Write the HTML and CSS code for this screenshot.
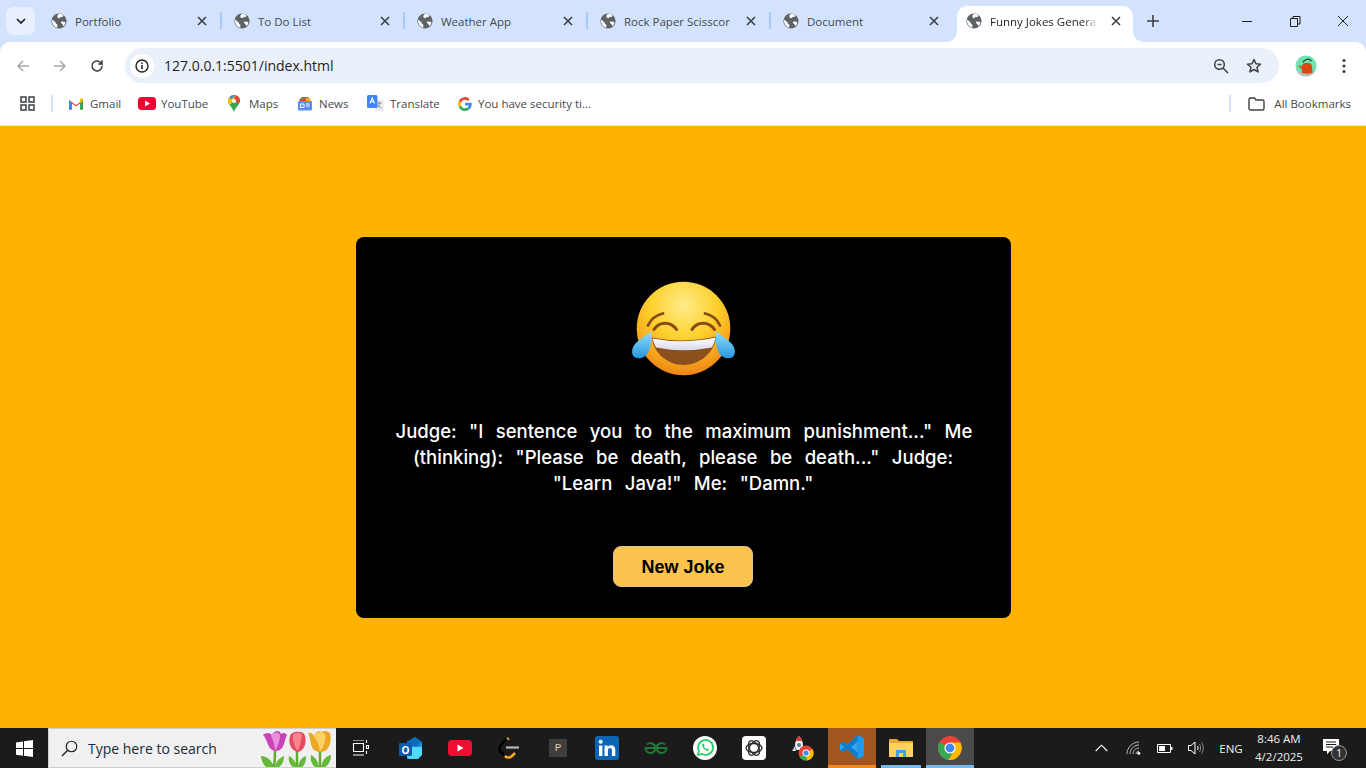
FILE: index.html
```html
<!DOCTYPE html>
<html lang="en">
<head>
<meta charset="utf-8">
<title>Funny Jokes Generator</title>
<link rel="stylesheet" href="styles.css">
</head>
<body>
<svg class="defs" width="0" height="0" aria-hidden="true">
  <defs>
    <symbol id="globe" viewBox="0 0 16 16">
      <circle cx="8" cy="8" r="7.6" fill="#5f6368"/>
      <path d="M1.200 6.600 4.600 9.400l.4 1.400 1.400 1-.2 3A7 7 0 0 1 1.200 6.600ZM7.600 1.100h2.800l2.200 1.600-1.600 1.500-1.400-.4-1 1.500-1.800-.5-.6-1.700ZM10 8.600l3.400.2 1.100 1a7 7 0 0 1-2.300 3.400l-.6-2-1.400-1Z" fill="#fff"/>
    </symbol>
    <symbol id="x" viewBox="0 0 10 10">
      <path d="M1 1l8 8M9 1l-8 8" stroke="#3c4043" stroke-width="1.600" fill="none"/>
    </symbol>
  </defs>
</svg>

<div class="browser">
  <header class="tabstrip">
    <button class="tablist"><svg width="10" height="6" viewBox="0 0 10 6"><path d="M1 1l4 4 4-4" fill="none" stroke="#202124" stroke-width="1.700"/></svg></button>
    <div class="tab"><svg class="fav"><use href="#globe"/></svg><span class="tab-title">Portfolio</span><svg class="tab-x"><use href="#x"/></svg></div>
    <div class="tab"><svg class="fav"><use href="#globe"/></svg><span class="tab-title">To Do List</span><svg class="tab-x"><use href="#x"/></svg></div>
    <div class="tab"><svg class="fav"><use href="#globe"/></svg><span class="tab-title">Weather App</span><svg class="tab-x"><use href="#x"/></svg></div>
    <div class="tab"><svg class="fav"><use href="#globe"/></svg><span class="tab-title">Rock Paper Scisscor</span><svg class="tab-x"><use href="#x"/></svg></div>
    <div class="tab tab-last"><svg class="fav"><use href="#globe"/></svg><span class="tab-title">Document</span><svg class="tab-x"><use href="#x"/></svg></div>
    <div class="tab-active"><svg class="fav"><use href="#globe"/></svg><span class="tab-title tab-title-active">Funny Jokes Genera</span><svg class="tab-x"><use href="#x"/></svg></div>
    <svg class="newtab" width="12" height="12" viewBox="0 0 12 12"><path d="M6 0v12M0 6h12" stroke="#3c4043" stroke-width="1.600"/></svg>
    <div class="winctl">
      <svg class="ctl" viewBox="0 0 48 20"><path d="M19 10.500h10" stroke="#1f1f1f" stroke-width="1"/></svg>
      <svg class="ctl" viewBox="0 0 48 20"><path d="M19.500 7.500h7v8h-7zM22 7.500V5.500h7v7.500h-2.500" fill="none" stroke="#1f1f1f" stroke-width="1"/></svg>
      <svg class="ctl" viewBox="0 0 48 20"><path d="M19 5l10 10M29 5 19 15" stroke="#1f1f1f" stroke-width="1"/></svg>
    </div>
  </header>

  <nav class="toolbar">
    <svg class="nav-ico" viewBox="0 0 16 16"><path d="M14 8H3M8 3 3 8l5 5" fill="none" stroke="#a5a8ac" stroke-width="1.500"/></svg>
    <svg class="nav-ico" viewBox="0 0 16 16"><path d="M2 8h11M8 3l5 5-5 5" fill="none" stroke="#a5a8ac" stroke-width="1.500"/></svg>
    <svg class="nav-ico" viewBox="0 0 16 16"><path d="M13 8a5 5 0 1 1-1.500-3.600L13 6V2.300M13 6H9.300" fill="none" stroke="#3c4043" stroke-width="1.500"/></svg>
    <div class="omnibox">
      <span class="site-info"><svg width="14" height="14" viewBox="0 0 14 14"><circle cx="7" cy="7" r="6" fill="none" stroke="#1f1f1f" stroke-width="1.400"/><path d="M7 6v4.200M7 3.600v1.400" stroke="#1f1f1f" stroke-width="1.500"/></svg></span>
      <span class="url">127.0.0.1:5501/index.html</span>
      <svg class="omni-ico zoom-ico" viewBox="0 0 16 16"><circle cx="6.500" cy="6.500" r="4.800" fill="none" stroke="#3c4043" stroke-width="1.500"/><path d="M4.500 6.500h4M10 10l5 5" stroke="#3c4043" stroke-width="1.500"/></svg>
      <svg class="omni-ico" viewBox="0 0 16 16"><path d="m8 1.500 1.900 4.300 4.700.4-3.600 3.100 1.100 4.600L8 11.500l-4.100 2.400L5 9.300 1.400 6.200l4.700-.4Z" fill="none" stroke="#3c4043" stroke-width="1.500" stroke-linejoin="round"/></svg>
    </div>
    <svg class="avatar" viewBox="0 0 22 22"><circle cx="11" cy="11" r="10.500" fill="#6fe3b0"/><path d="M2.500 17a10.500 10.500 0 0 0 17 0Z" fill="#b9bcc0"/><path d="M3.500 10l3 2 .5-1.500C8 8.500 9.500 8 11 8h2c2.500 0 4 1.500 4 3.500l.5 6c-.5 1.500-10 1.500-10.500 0l-.2-3.500L4 12Z" fill="#d9480f"/><path d="M8 7.500c1-3.500 6-4.500 8.500-1.500" fill="none" stroke="#274c3c" stroke-width="1.300"/></svg>
    <svg class="menu" width="4" height="16" viewBox="0 0 4 16"><circle cx="2" cy="2.500" r="1.600" fill="#3c4043"/><circle cx="2" cy="8" r="1.600" fill="#3c4043"/><circle cx="2" cy="13.500" r="1.600" fill="#3c4043"/></svg>
  </nav>

  <div class="bookmarks">
    <svg class="apps" width="15" height="15" viewBox="0 0 15 15"><path d="M1 1h5v5H1zM9 1h5v5H9zM1 9h5v5H1zM9 9h5v5H9z" fill="none" stroke="#3c4043" stroke-width="1.500"/></svg>
    <span class="bm-sep"></span>
    <div class="bm-list">
      <div class="bm"><svg class="bm-ico" viewBox="0 0 16 16"><path d="M1 13.500V4l7 5 7-5v9.500h-3V7.500L8 10.500 4 7.500v6Z" fill="#ea4335"/><path d="M1 13.500h3v-6L1 4Z" fill="#4285f4"/><path d="M12 13.500h3V4l-3 3.500Z" fill="#34a853"/><path d="M15 4v-.5c0-1-1.200-1.500-2-1L12 3.300v4.200Z" fill="#fbbc04"/></svg><span>Gmail</span></div>
      <div class="bm"><svg class="bm-ico bm-yt" viewBox="0 0 18 13"><rect width="18" height="13" rx="3.500" fill="#f00033"/><path d="m7 3.500 5 3-5 3Z" fill="#fff"/></svg><span>YouTube</span></div>
      <div class="bm"><svg class="bm-ico bm-maps" viewBox="0 0 12 17"><path d="M6 0a6 6 0 0 1 6 6c0 3.500-4.500 6-6 11C4.500 12 0 9.500 0 6a6 6 0 0 1 6-6Z" fill="#34a853"/><path d="M6 0a6 6 0 0 1 4.500 2L1.600 10A6 6 0 0 1 0 6a6 6 0 0 1 6-6Z" fill="#fbbc04"/><path d="M1.600 2A6 6 0 0 1 6 0l1.500.2L3 4.500Z" fill="#4285f4"/><path d="M7.500.2A6 6 0 0 1 12 6l-2 2.500L6 4Z" fill="#ea4335"/><circle cx="6" cy="6" r="2.100" fill="#fff"/></svg><span>Maps</span></div>
      <div class="bm"><svg class="bm-ico" viewBox="0 0 16 16"><path d="M3 3l2-2h6l2 2v4H3Z" fill="#34a853"/><path d="M2.500 3 9 2v4H2.500Z" fill="#ea4335"/><path d="M9 2l4.500 1v3H9Z" fill="#fbbc04"/><rect x="1" y="5" width="14" height="9.500" rx="1.200" fill="#5a8eea"/><path d="M3.500 8h3.500v3.500H3.500ZM9 8h3.500M9 10h3.500" fill="none" stroke="#fff" stroke-width="1"/></svg><span>News</span></div>
      <div class="bm"><svg class="bm-ico bm-tr" viewBox="0 0 17 17"><path d="M8 4.500h8.500v11.500H8Z" fill="#e8eaed"/><path d="M10.500 8h4M12.500 7v1c0 2-1.500 4-3 4.500M11 10c.5 1.200 2 2.500 3.500 3" fill="none" stroke="#80868b" stroke-width=".9"/><rect width="10.500" height="13" rx="1.500" fill="#4285f4"/><path d="M3 8.500 5.200 3l2.300 5.500M3.800 6.800h2.800" fill="none" stroke="#fff" stroke-width="1.100"/></svg><span>Translate</span></div>
      <div class="bm"><svg class="bm-ico bm-g" viewBox="0 0 14 14"><path d="M13.700 7.200c0-.5 0-1-.1-1.400H7v2.700h3.800a3.200 3.200 0 0 1-1.400 2.100l2.200 1.700a6.700 6.700 0 0 0 2.100-5.100Z" fill="#4285f4"/><path d="M7 14c1.900 0 3.400-.6 4.600-1.700l-2.200-1.700c-.6.400-1.400.7-2.400.7a4.200 4.200 0 0 1-3.900-2.900L.8 10.100A7 7 0 0 0 7 14Z" fill="#34a853"/><path d="M3.100 8.400a4.200 4.200 0 0 1 0-2.700L.8 3.900a7 7 0 0 0 0 6.300Z" fill="#fbbc04"/><path d="M7 2.800c1 0 2 .4 2.700 1.100l2-2A7 7 0 0 0 .8 3.900l2.300 1.800A4.200 4.200 0 0 1 7 2.800Z" fill="#ea4335"/></svg><span>You have security ti...</span></div>
    </div>
    <span class="bm-sep bm-sep-right"></span>
    <div class="bm bm-all"><svg class="bm-ico bm-folder" viewBox="0 0 17 14"><path d="M1 2.500A1.500 1.500 0 0 1 2.500 1h4l1.500 2h6.500A1.500 1.500 0 0 1 16 4.500v7a1.500 1.500 0 0 1-1.500 1.500h-12A1.500 1.500 0 0 1 1 11.500Z" fill="none" stroke="#3c4043" stroke-width="1.400"/></svg><span>All Bookmarks</span></div>
  </div>

  <main class="page">
    <section class="card">
      <svg class="emoji" viewBox="18 8 110 100" role="img" aria-label="Face with tears of joy">
        <defs>
          <radialGradient id="face" cx="50%" cy="25%" r="80%">
            <stop offset="0" stop-color="#ffeb8a"/><stop offset=".45" stop-color="#fdd02c"/><stop offset=".8" stop-color="#f59c1c"/><stop offset="1" stop-color="#e67a12"/>
          </radialGradient>
          <linearGradient id="tear" x1="0" y1="0" x2="0" y2="1">
            <stop offset="0" stop-color="#8ee0f8"/><stop offset="1" stop-color="#2796e0"/>
          </linearGradient>
          <linearGradient id="teeth" x1="0" y1="0" x2="0" y2="1">
            <stop offset="0" stop-color="#ffffff"/><stop offset="1" stop-color="#d9d8ea"/>
          </linearGradient>
        </defs>
        <circle cx="73.500" cy="58.500" r="46.800" fill="url(#face)"/>
        <path d="M38 55.500C41 49 46 45 53 43.500M110 55.500C107 49 102 45 95 43.500" fill="none" stroke="#8a4a16" stroke-width="2.800" stroke-linecap="round"/>
        <path d="M44 59.500C49 51 61 51 66.500 59.500M82 59.500C87 51 99 51 104.500 59.500" fill="none" stroke="#8a4a16" stroke-width="3" stroke-linecap="round"/>
        <path d="M42 67.500Q73 74 106 66.500C105 82 90 95 73.500 95S43 82 42 67.500Z" fill="#8a4f1c"/>
        <path d="M42.500 68.500Q73 74.500 105.500 67.500 104.500 73 102 77.500 73 83 46 77.500 43.500 73 42.500 68.500Z" fill="url(#teeth)"/>
        <path d="M41 61.500C41.500 70 41 80 36 85.500A10 10 0 0 1 24 87C20.500 83 22 76 27 72 31 68.500 36 65 41 61.500Z" fill="url(#tear)"/>
        <path d="M106 61.500C105.500 70 106 80 111 85.500A10 10 0 0 0 123 87C126.500 83 125 76 120 72 116 68.500 111 65 106 61.500Z" fill="url(#tear)"/>
      </svg>
      <p class="joke">Judge: "I sentence you to the maximum punishment..." Me<br>(thinking): "Please be death, please be death..." Judge:<br>"Learn Java!" Me: "Damn."</p>
      <button class="new-joke">New Joke</button>
    </section>
  </main>

  <footer class="taskbar">
    <svg class="start" width="17" height="17" viewBox="0 0 17 17"><path d="M0 2.400 7 1.400v6.700H0ZM8 1.200 17 0v8.100H8ZM0 9h7v6.700l-7-1ZM8 9h9v8l-9-1.200Z" fill="#fff"/></svg>
    <div class="search">
      <svg class="search-ico" width="17" height="17" viewBox="0 0 17 17"><circle cx="10.500" cy="6.500" r="5.300" fill="none" stroke="#1a1a1a" stroke-width="1.100"/><path d="M6.700 10.300 1 16" stroke="#1a1a1a" stroke-width="1.300"/></svg>
      <span class="search-text">Type here to search</span>
      <svg class="tulips" width="76" height="38" viewBox="0 0 76 38">
        <path d="M17 21c0 6 0 11-1 17M39 22c0 6 0 11 0 16M62 22c0 6 0 11 0 16" fill="none" stroke="#5fae33" stroke-width="2.500"/>
        <path d="M3 27c5 0 11 4 13 11H8c-3-3-5-7-5-11ZM17 38c1-5 4-9 9-11 0 5-2 9-5 11ZM39 38c-1-5-4-9-8-11-1 5 1 9 4 11ZM40 38c1-6 4-10 8-11 0 5-1 9-4 11ZM61 38c-1-6-4-10-8-12-1 5 1 10 4 12ZM63 38c1-6 5-11 10-12 0 5-2 10-6 12Z" fill="#66b838"/>
        <path d="M5 6C9 3 12 4 14 6 16 1 22 1 23 5 25 3 28 4 29 6 27 9 27 15 24 19 21 23 15 23 12 19 9 15 9 10 5 6Z" fill="#c944b8"/>
        <path d="M13 7c2 4 4 9 4 15 3-5 5-11 5-16-2-4-7-3-9 1Z" fill="#ea8ee0"/>
        <path d="M32 7C33 2 46 1 47 7 49 14 46 22 40 23 33 22 30 14 32 7Z" fill="#e84a5f"/>
        <path d="M35 6c2-3 8-3 9 0-1 5-2 11-4 16-3-4-6-10-5-16Z" fill="#f8858f"/>
        <path d="M50 4C53 3 55 5 56 7 58 3 61 1 63 3 66 1 70 2 72 4 74 11 72 19 67 22 63 24 58 23 55 20 52 16 53 9 50 4Z" fill="#eea725"/>
        <path d="M56 7c3 4 5 9 6 15 4-4 6-11 5-17-2-3-8-3-11 2Z" fill="#fbd163"/>
      </svg>
    </div>
    <div class="tasks">
      <div class="task task-view"><svg width="18" height="16" viewBox="0 0 18 16"><path d="M2 0h11M2 15h11M2.500 3.500h10v8h-10z" fill="none" stroke="#fff" stroke-width="1.100"/><path d="M15.500 0v3M15.500 5.500h2v3h-2zM15.500 11v3" fill="none" stroke="#fff" stroke-width="1.100"/></svg></div>
      <div class="task"><svg width="24" height="24" viewBox="0 0 24 24"><path d="M8 6l8-5 7 5v13l-7 4H8Z" fill="#1490df"/><path d="M8 6l8-5 7 5-7 5Z" fill="#0f6cbd"/><path d="M8 11h15v8l-4 4H10l-2-2Z" fill="#50d9ff"/><rect y="7" width="13" height="13" rx="1" fill="#0a5ca8"/><text class="o-letter" x="6.500" y="17.500">O</text></svg></div>
      <div class="task"><svg width="24" height="16" viewBox="0 0 24 16"><rect width="24" height="16" rx="4" fill="#f00f30"/><path d="m9.500 4.500 6 3.500-6 3.500Z" fill="#fff"/></svg></div>
      <div class="task"><svg width="22" height="24" viewBox="0 0 22 24"><path d="M9 2 3 9c-2 2-2 5 0 7l3 3" fill="none" stroke="#000" stroke-width="2.600"/><path d="M9 1.500 11 4" fill="none" stroke="#f5a623" stroke-width="1.800"/><path d="M7 20c2 2 5 2 7 0l3-3" fill="none" stroke="#f5a623" stroke-width="2.600"/><path d="M8 11.500h13" stroke="#b8b8b8" stroke-width="2.200"/></svg></div>
      <div class="task"><div class="p-box">P</div></div>
      <div class="task"><svg width="24" height="24" viewBox="0 0 24 24"><rect width="24" height="24" rx="2.500" fill="#0a66b2"/><path d="M4 9.500h3.400V20H4ZM9.500 9.500h3.200V11c.7-1 1.800-1.800 3.400-1.800 3 0 4.200 1.900 4.200 5V20h-3.400v-5.200c0-1.600-.4-2.700-1.800-2.700s-2.200 1.100-2.200 2.700V20H9.500Z" fill="#fff"/><circle cx="5.700" cy="5.800" r="2" fill="#fff"/></svg></div>
      <div class="task"><svg width="24" height="12" viewBox="0 0 24 12"><path d="M12 6h10.500A5 5 0 1 1 21 2.500M12 6H1.500A5 5 0 1 0 3 2.500" fill="none" stroke="#1f7a38" stroke-width="1.800"/><path d="M8 1.500c2 1 3 3 4 4.500 1-1.500 2-3.500 4-4.500M8 10.500C10 10 11 8 12 6c1 2 2 4 4 4.500" fill="none" stroke="#1f7a38" stroke-width="1.500"/></svg></div>
      <div class="task"><svg width="24" height="24" viewBox="0 0 24 24"><circle cx="12" cy="12" r="12" fill="#fff"/><path d="M5 19l1-4a7.500 7.500 0 1 1 3 3Z" fill="#fff" stroke="#25d366" stroke-width="1.800"/><path d="M9.500 8c-1.200 1 0 3.500 1.500 5s3.500 2.300 4.500 1.500l.5-1.300-1.800-1-.8.700c-1-.4-2-1.500-2.400-2.500l.7-.8-.9-1.800Z" fill="#25d366"/></svg></div>
      <div class="task"><svg width="24" height="24" viewBox="0 0 24 24"><rect width="24" height="24" rx="4" fill="#fff"/><g fill="none" stroke="#2a2a2a" stroke-width="1.300"><ellipse cx="12" cy="12" rx="8" ry="4.500"/><ellipse cx="12" cy="12" rx="8" ry="4.500" transform="rotate(60 12 12)"/><ellipse cx="12" cy="12" rx="8" ry="4.500" transform="rotate(120 12 12)"/></g></svg></div>
      <div class="task"><svg width="24" height="26" viewBox="0 0 24 26"><path d="M8 1c3 3 4 6 4 10l-1.500 4h-5L4 11c0-4 1-7 4-10Z" fill="#eceff1"/><path d="M8 1c1.500 1.500 2.500 3 3 5H5c.500-2 1.500-3.500 3-5Z" fill="#e53935"/><circle cx="8" cy="10" r="2" fill="#607d8b"/><path d="M4 11 1 16h4ZM12 11l2 3h-3Z" fill="#cfd8dc"/><circle cx="15" cy="18" r="7.500" fill="#ea4335"/><path d="M15 18 8.500 21.700A7.500 7.500 0 0 0 16 25.400Z" fill="#34a853"/><path d="M15 18l1 7.400A7.500 7.500 0 0 0 21.500 14Z" fill="#fbbc04"/><circle cx="15" cy="18" r="3.500" fill="#fff"/><circle cx="15" cy="18" r="2.600" fill="#4285f4"/></svg></div>
      <div class="task task-code"><svg width="24" height="24" viewBox="0 0 24 24"><path d="M17.500 0 24 3v18l-6.500 3Z" fill="#1f9cf0"/><path d="M17.500 0v24L7 14l-4 3-3-1.500V8.500L3 7l4 3Z" fill="#29a8f5"/><path d="M17.500 0 7.200 10 3 7 0 8.500 4.500 12 0 15.500 3 17l4.200-3 10.300 10v-6.500L11 12l6.500-5.500Z" fill="#0f7cc9"/></svg></div>
      <div class="task task-open"><svg width="24" height="20" viewBox="0 0 24 20"><path d="M0 2a1 1 0 0 1 1-1h7l2 2h13a1 1 0 0 1 1 1v14a1 1 0 0 1-1 1H1a1 1 0 0 1-1-1Z" fill="#e9a92c"/><path d="M0 5h24v13a1 1 0 0 1-1 1H1a1 1 0 0 1-1-1Z" fill="#fdd35c"/><path d="M7 12h10v7h-3v-4h-4v4H7Z" fill="#3fa2e5"/></svg></div>
      <div class="task task-open task-chrome"><svg width="24" height="24" viewBox="0 0 24 24"><circle cx="12" cy="12" r="12" fill="#ea4335"/><path d="M12 12 1.600 6A12 12 0 0 0 10.400 23.900L16 15Z" fill="#34a853"/><path d="M12 6.500h10.400A12 12 0 0 1 10.400 23.900L16 15Z" fill="#fbbc04"/><circle cx="12" cy="12" r="5.600" fill="#fff"/><circle cx="12" cy="12" r="4.400" fill="#4285f4"/></svg></div>
    </div>
    <div class="tray">
      <svg class="tray-ico tray-chev" width="13" height="8" viewBox="0 0 13 8"><path d="m.7 7 5.800-5.800L12.300 7" fill="none" stroke="#fff" stroke-width="1.100"/></svg>
      <svg class="tray-ico tray-wifi" width="15" height="14" viewBox="0 0 15 14"><g fill="none" stroke="#bdbdbd" stroke-width="1"><path d="M1 13C1 6.500 6.500 1 13 1"/><path d="M4 13c0-5 4-9 9-9"/><path d="M7 13c0-3.300 2.700-6 6-6"/><path d="M10 13c0-1.700 1.300-3 3-3"/></g><circle cx="12.800" cy="12.300" r="1.500" fill="#fff"/></svg>
      <svg class="tray-ico tray-batt" width="16" height="9" viewBox="0 0 16 9"><path d="M.5.500h13v8H.5z" fill="none" stroke="#fff"/><path d="M2 2h6v5H2z" fill="#fff"/><path d="M14 3h1.500v3H14z" fill="#fff"/></svg>
      <svg class="tray-ico tray-vol" width="16" height="14" viewBox="0 0 16 14"><path d="M.5 4.500h2.500L7 1v12L3 9.500H.5Z" fill="none" stroke="#fff"/><path d="M9.500 5c.8 1.300.8 2.700 0 4" fill="none" stroke="#fff"/><path d="M11.500 3c1.500 2.500 1.500 5.500 0 8M13.500 1c2.300 3.500 2.300 8.500 0 12" fill="none" stroke="#8a8a8a"/></svg>
      <span class="tray-lang">ENG</span>
      <div class="clock"><span>8:46 AM</span><span>4/2/2025</span></div>
      <div class="notif">
        <svg width="16" height="16" viewBox="0 0 16 16"><path d="M0 0h16v12H7l-3 3.500V12H0Z" fill="#fff"/><path d="M3 3h10M3 5.500h10M3 8h7" stroke="#1a1a1a" stroke-width="1"/></svg>
        <span class="badge">1</span>
      </div>
    </div>
  </footer>
</div>
</body>
</html>
```

FILE: styles.css
```css
* { box-sizing: border-box; }
html, body { margin: 0; height: 100%; overflow: hidden; }
body { font-family: "Open Sans", "Noto Sans", sans-serif; }
.defs { position: absolute; }
svg { display: block; flex: none; }

.browser { height: 768px; display: flex; flex-direction: column; background: #d3e3fd; }

/* Tab strip */
.tabstrip { height: 42px; display: flex; align-items: flex-start; flex: none; background: #d3e3fd; }
.tablist { width: 29px; height: 28px; margin: 7px 4px 0 6px; padding: 0; border: 0; border-radius: 8px; background: #e9f0fd; display: flex; align-items: center; justify-content: center; }
.tab { width: 183px; height: 42px; padding: 0 15px 0 12px; display: flex; align-items: center; position: relative; }
.tab::after { content: ""; position: absolute; right: 0; top: 12px; width: 2px; height: 17px; background: #a8c7fa; }
.tab-last::after { display: none; }
.fav { width: 16px; height: 16px; flex: none; }
.tab-title { margin-left: 8px; flex: 1; min-width: 0; white-space: nowrap; font-size: 11.500px; color: #45494d; }
.tab-x { width: 10px; height: 10px; flex: none; }
.tab-active { width: 176px; height: 36px; margin: 6px 0 0 3px; padding: 0 12px 6px 9px; display: flex; align-items: center; background: #fff; border-radius: 10px 10px 0 0; position: relative; }
.tab-active::before, .tab-active::after { content: ""; position: absolute; bottom: 0; width: 10px; height: 10px; background: radial-gradient(circle at var(--cx) 0, #d3e3fd 9.500px, #fff 10px); }
.tab-active::before { left: -10px; --cx: 0; }
.tab-active::after { right: -10px; --cx: 100%; }
.tab-title-active { color: #1f1f1f; margin-right: 12px; -webkit-mask-image: linear-gradient(to right, #000 85%, transparent); mask-image: linear-gradient(to right, #000 85%, transparent); }
.newtab { margin: 15px 0 0 14px; }
.winctl { margin-left: auto; margin-right: -1px; display: flex; height: 42px; padding-top: 11px; }
.ctl { width: 48px; height: 20px; }

/* Toolbar */
.toolbar { height: 42px; flex: none; display: flex; align-items: center; background: #fff; padding: 5px 0 0 15px; border-radius: 10px 10px 0 0; }
.nav-ico { width: 16px; height: 16px; margin-right: 21px; }
.nav-ico:nth-of-type(3) { margin-right: 20px; }
.omnibox { width: 1154px; height: 35px; padding: 0 17px 0 5px; background: #eaf0fa; border-radius: 18px; display: flex; align-items: center; }
.site-info { width: 24px; height: 24px; border-radius: 50%; background: #fff; display: flex; align-items: center; justify-content: center; flex: none; }
.url { margin-left: 10px; flex: 1; font-size: 14px; color: #1f1f1f; white-space: nowrap; }
.omni-ico { width: 16px; height: 16px; }
.zoom-ico { margin-right: 17px; }
.avatar { width: 22px; height: 22px; margin-left: 16px; }
.menu { margin-left: 25px; }

/* Bookmarks */
.bookmarks { height: 42px; flex: none; display: flex; align-items: center; background: #fff; border-bottom: 1px solid #e3e3e3; padding: 0 15px 2px 20px; }
.apps { margin-right: 16px; }
.bm-sep { width: 2px; height: 17px; background: #d3e3fd; flex: none; }
.bm-list { margin-left: 15px; display: grid; grid-template-columns: 70px 90px 69px 70px 91px auto; }
.bm { display: flex; align-items: center; font-size: 11.500px; color: #45494d; white-space: nowrap; }
.bm-ico { width: 16px; height: 16px; margin-right: 6px; }
.bm-yt { width: 18px; height: 13px; margin-right: 5px; }
.bm-maps { width: 12px; height: 17px; margin-right: 9px; }
.bm-tr { width: 17px; height: 17px; margin-right: 6px; }
.bm-g { width: 14px; height: 14px; margin-right: 6px; }
.bm-sep-right { margin-left: auto; }
.bm-all { margin-left: 17px; }
.bm-folder { width: 17px; height: 14px; margin-right: 9px; }

/* Page */
.page { flex: 1; min-height: 0; background: #ffb300; display: flex; align-items: center; justify-content: center; }
.card { width: 655px; height: 381px; padding: 41px 40px 31px; background: #000; border-radius: 8px; display: flex; flex-direction: column; align-items: center; }
.emoji { width: 110px; height: 100px; flex: none; }
.joke { width: 100%; margin: 40px 0 0; font-family: Inter, "Noto Sans", sans-serif; font-weight: 500; font-size: 18.500px; line-height: 26px; color: #fff; text-align: center; white-space: nowrap; word-spacing: 7.500px; }
.new-joke { width: 140px; height: 41px; margin-top: 50px; padding: 2px 0 0; border: 1px solid #d9c38c; border-radius: 8px; background: #fcc44f; color: #000; font-family: "Liberation Sans", Arial, sans-serif; font-weight: 700; font-size: 18px; }

/* Taskbar */
.taskbar { height: 40px; flex: none; display: flex; align-items: center; background: #1b1b1b; }
.start { margin-left: 16px; margin-right: 15px; }
.search { width: 288px; height: 40px; display: flex; align-items: center; background: #f0f0f0; border: 1px solid #cfcfcf; border-width: 1px 0 1px 1px; position: relative; }
.search-ico { margin-left: 12px; }
.search-text { margin-left: 10px; font-size: 14px; color: #1b2a3a; white-space: nowrap; }
.tulips { position: absolute; right: 2px; bottom: 0; }
.tasks { display: flex; margin-left: 2px; gap: 1px; height: 40px; }
.task { width: 48px; height: 40px; display: flex; align-items: center; justify-content: center; position: relative; }
.task-view { padding-right: 4px; }
.task-code { background: #a2561f; border-bottom: 3px solid #f08a1d; }
.task-open::after { content: ""; position: absolute; left: 4px; right: 4px; bottom: 0; height: 3px; background: #76b9ed; }
.task-chrome { background: #4a4a4a; }
.task-chrome::after { left: 0; right: 0; }
.p-box { width: 18px; height: 18px; background: #3f3f3f; color: #d8c9a0; font-family: "Liberation Mono", monospace; font-size: 11px; display: flex; align-items: center; justify-content: center; }
.o-letter { font-family: "Open Sans", sans-serif; font-weight: 700; font-size: 10px; fill: #fff; text-anchor: middle; }
.tray { margin-left: auto; display: flex; align-items: center; height: 40px; color: #fff; padding-right: 19px; }
.tray-wifi { margin-left: 18px; }
.tray-batt { margin-left: 16px; }
.tray-vol { margin-left: 15px; }
.tray-lang { margin-left: 12px; width: 30px; font-size: 11.500px; text-align: center; color: #eee; }
.clock { margin-left: 3px; width: 60px; display: flex; flex-direction: column; align-items: center; font-size: 11.500px; line-height: 18px; color: #eee; }
.notif { margin-left: 14px; width: 24px; height: 26px; position: relative; padding-top: 4px; }
.badge { position: absolute; left: 8px; top: 10px; width: 16px; height: 16px; border-radius: 50%; background: #333; border: 1px solid #999; color: #fff; font-size: 10px; line-height: 14px; text-align: center; }
```
